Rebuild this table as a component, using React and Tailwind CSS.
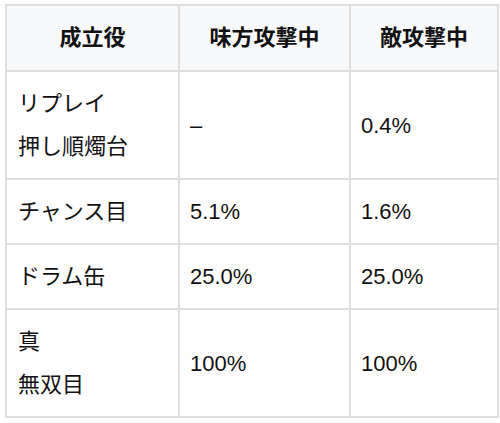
import React from "react";

const rows = [
  { name: ["リプレイ", "押し順燭台"], ally: "–", enemy: "0.4%" },
  { name: ["チャンス目"], ally: "5.1%", enemy: "1.6%" },
  { name: ["ドラム缶"], ally: "25.0%", enemy: "25.0%" },
  { name: ["真", "無双目"], ally: "100%", enemy: "100%" },
];

const App = () => {
  return (
    <div
      className="bg-white w-[500px] h-[423px] pl-[5px] pt-[4px] text-[#111]"
      style={{ fontFamily: '"Liberation Sans", "Noto Sans CJK JP", sans-serif' }}
    >
      <table className="w-[492px] table-fixed border-collapse border-2 border-[#dedede] text-[22px]">
        <colgroup>
          <col className="w-[173px]" />
          <col className="w-[171px]" />
          <col className="w-[148px]" />
        </colgroup>
        <thead>
          <tr className="bg-[#f8f9fa]">
            <th className="border-2 border-[#dedede] py-[11px] leading-[42px] font-bold text-center">成立役</th>
            <th className="border-2 border-[#dedede] py-[11px] leading-[42px] font-bold text-center">味方攻撃中</th>
            <th className="border-2 border-[#dedede] py-[11px] leading-[42px] font-bold text-center">敵攻撃中</th>
          </tr>
        </thead>
        <tbody>
          {rows.map((r, i) => (
            <tr key={i}>
              <td className="border-2 border-[#dedede] px-[11px] py-[10px] leading-[43px] align-middle">
                {r.name.map((n, j) => (
                  <div key={j}>{n}</div>
                ))}
              </td>
              <td className="border-2 border-[#dedede] px-[10px] py-[10px] leading-[43px] align-middle">{r.ally}</td>
              <td className="border-2 border-[#dedede] px-[10px] py-[10px] leading-[43px] align-middle">{r.enemy}</td>
            </tr>
          ))}
        </tbody>
      </table>
    </div>
  );
};

export default App;
